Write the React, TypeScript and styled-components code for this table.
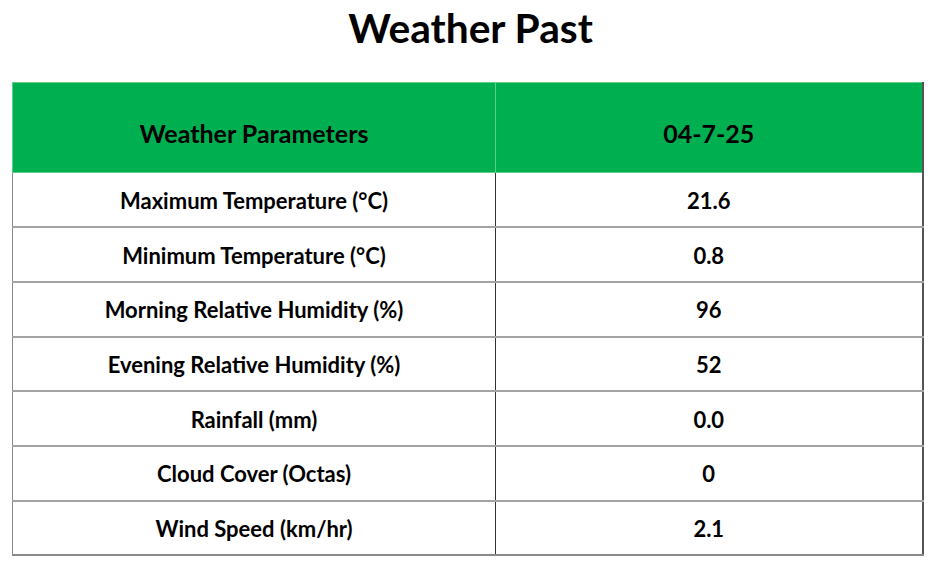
import { styled, createGlobalStyle } from 'styled-components';

const rows = [
    { label: 'Maximum Temperature (°C)', value: '21.6' },
    { label: 'Minimum Temperature (°C)', value: '0.8' },
    { label: 'Morning Relative Humidity (%)', value: '96' },
    { label: 'Evening Relative Humidity (%)', value: '52' },
    { label: 'Rainfall (mm)', value: '0.0' },
    { label: 'Cloud Cover (Octas)', value: '0' },
    { label: 'Wind Speed (km/hr)', value: '2.1' },
];

function App() {
    return (
        <>
            <GlobalStyle />
            <PageWrapper>
                <Title>Weather Past</Title>
                <Table>
                    <colgroup>
                        <col style={{ width: 483 }} />
                        <col style={{ width: 427 }} />
                    </colgroup>
                    <thead>
                        <tr>
                            <HeadCell>Weather Parameters</HeadCell>
                            <HeadCell>04-7-25</HeadCell>
                        </tr>
                    </thead>
                    <tbody>
                        {rows.map((row) => (
                            <BodyRow key={row.label}>
                                <LabelCell>{row.label}</LabelCell>
                                <ValueCell>{row.value}</ValueCell>
                            </BodyRow>
                        ))}
                    </tbody>
                </Table>
            </PageWrapper>
        </>
    );
}

export default App;

const GlobalStyle = createGlobalStyle`
    body {
        margin: 0;
        background: #ffffff;
        font-family: Lato, "Liberation Sans", sans-serif;
        color: #000000;
    }
`;

const PageWrapper = styled.div`
    width: 930px;
    height: 570px;
    padding-top: 4px;
    box-sizing: border-box;
`;

const Title = styled.h1`
    margin: 0 0 30px 0;
    padding-left: 11px;
    text-align: center;
    font-size: 40.7px;
    line-height: 48px;
    font-weight: 700;
`;

const Table = styled.table`
    margin-left: 12px;
    width: 910px;
    border-collapse: collapse;
    table-layout: fixed;
    border-left: 1px solid #8a8a8a;
    border-right: 2px solid #555555;
    border-bottom: 2px solid #8a8a8a;
`;

const HeadCell = styled.th`
    height: 90px;
    padding: 11px 0 0 0;
    box-sizing: border-box;
    background: #00b050;
    border: 1px solid #5fce8a;
    font-size: 25px;
    font-weight: 700;
    text-align: center;
`;

const BodyRow = styled.tr`
    height: 54.7px;
    border-top: 2px solid #a3a3a3;

    &:first-child {
        border-top: none;
    }
`;

const LabelCell = styled.td`
    padding: 1px 0 0 0;
    text-align: center;
    font-size: 22px;
    font-weight: 700;
    border-right: 1px solid #333333;
`;

const ValueCell = styled(LabelCell)`
    border-right: none;
`;
